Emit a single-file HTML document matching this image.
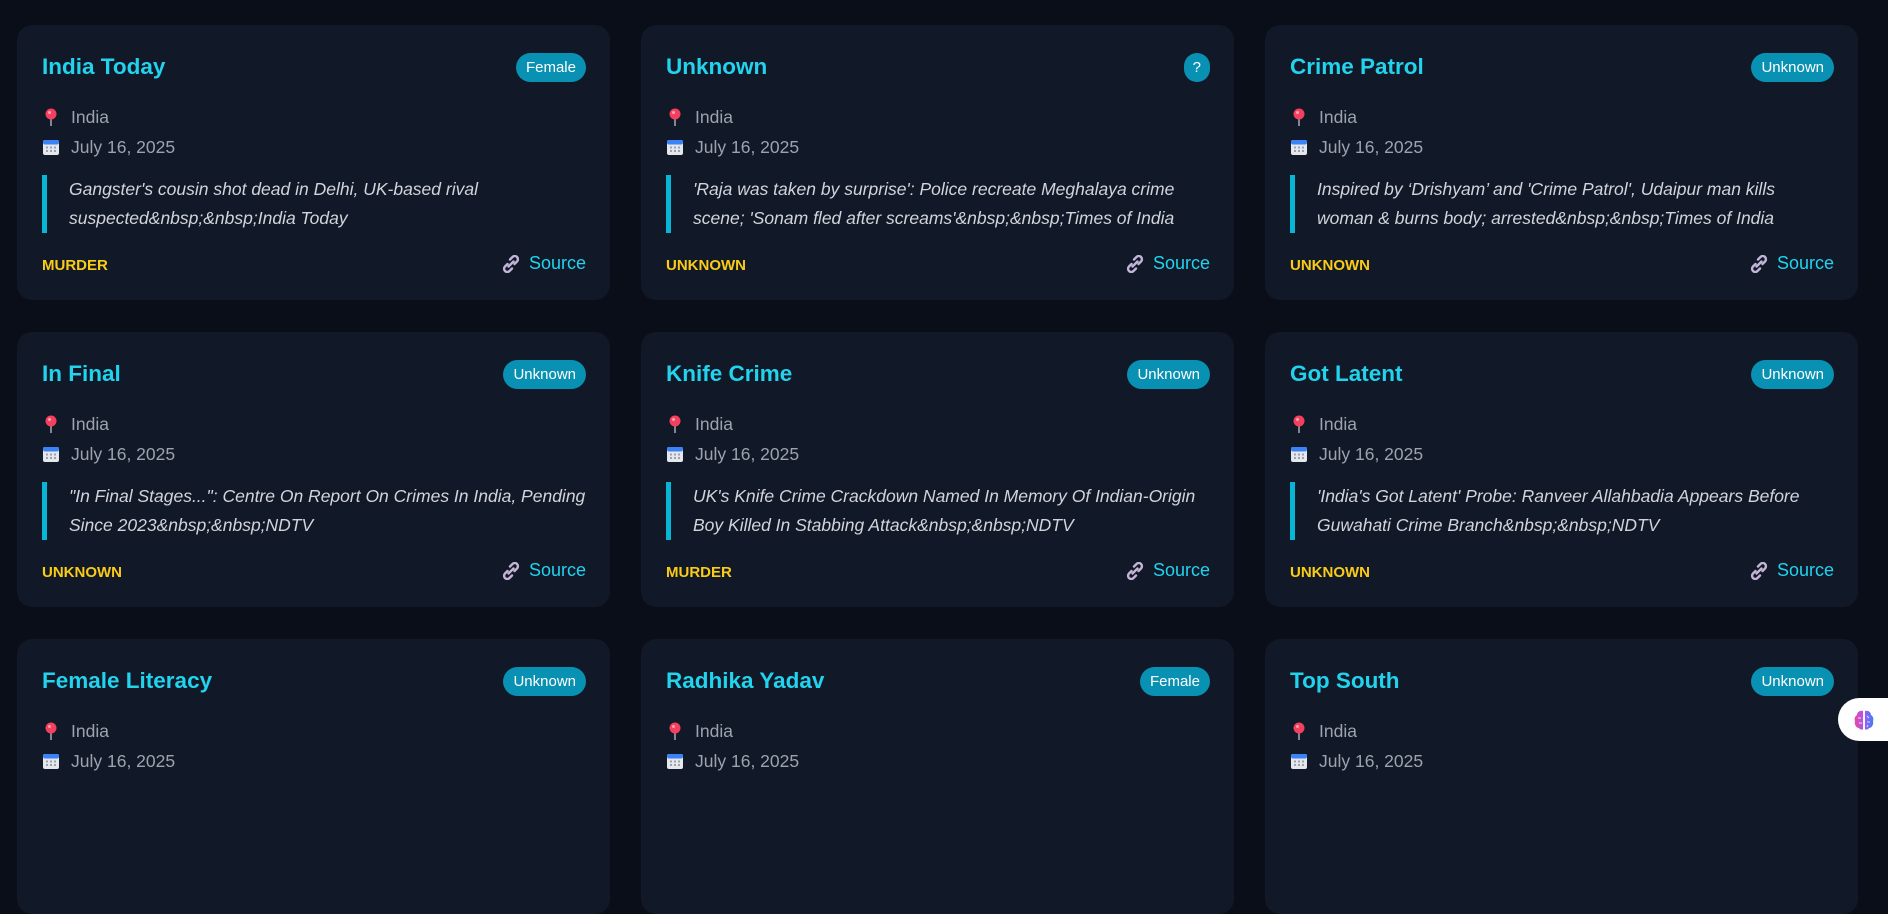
<!DOCTYPE html>
<html><head><meta charset="utf-8"><style>
*{margin:0;padding:0;box-sizing:border-box}
body{width:1888px;height:770px;overflow:hidden;background:#0a0e18;font-family:"Liberation Sans",sans-serif;position:relative}
.card{position:absolute;width:593px;height:275px;background:#111827;border-radius:15px}
.t{position:absolute;left:25px;top:27px;font-size:22.5px;font-weight:bold;color:#22d3ee;line-height:30px}
.b{position:absolute;right:24px;top:28px;height:29px;line-height:29px;padding:0 10px;border-radius:15px;background:#0891b2;color:#fff;font-size:15px}
.m{position:absolute;left:25px;font-size:17.5px;color:#9ca3af;line-height:22px;display:flex;align-items:center}
.m i{display:inline-flex;justify-content:center;width:18px;margin-right:11px}
.q{position:absolute;left:25px;top:150px;width:545px;border-left:5px solid #06b6d4;padding-left:22px;font-style:italic;font-size:17.5px;line-height:29px;color:#d1d5db}
.c{position:absolute;left:25px;top:232px;font-size:15px;font-weight:bold;color:#facc15}
.s{position:absolute;right:24px;top:228px;font-size:18px;color:#22d3ee;display:flex;align-items:center}
.s svg{margin-right:9px}
.fab{position:absolute;left:1838px;top:698px;width:60px;height:43px;background:#fff;border-radius:22px 0 0 22px}
</style></head><body>
<svg width="0" height="0" style="position:absolute"><defs>
<symbol id="pin" viewBox="0 0 14 18"><line x1="7" y1="8" x2="7" y2="18" stroke="#9ca3af" stroke-width="1.6"/><circle cx="7" cy="6" r="5.5" fill="#f43f5e"/><circle cx="5.5" cy="4.5" r="1.5" fill="#fda4af"/></symbol>
<symbol id="cal" viewBox="0 0 18 18"><rect x="1" y="2" width="16" height="15" rx="2" fill="#e5e7eb"/><rect x="1" y="2" width="16" height="4.5" rx="2" fill="#3b82f6"/><g fill="#94a3b8"><rect x="4" y="8.5" width="2" height="2"/><rect x="8" y="8.5" width="2" height="2"/><rect x="12" y="8.5" width="2" height="2"/><rect x="4" y="12" width="2" height="2"/><rect x="8" y="12" width="2" height="2"/><rect x="12" y="12" width="2" height="2"/></g></symbol>
<symbol id="lnk" viewBox="0 0 18 18"><g fill="none" stroke="#c4b5d8" stroke-width="2.4" stroke-linecap="round"><path d="M8 4.5l2.5-2.5a3 3 0 0 1 4.5 4.5l-2.5 2.5"/><path d="M10 13.5l-2.5 2.5a3 3 0 0 1-4.5-4.5l2.5-2.5"/><path d="M6.5 11.5l5-5"/></g></symbol>
</defs></svg>

<div class="card" style="left:17px;top:25px"><div class="t">India Today</div><div class="b">Female</div>
<div class="m" style="top:81px"><i><svg width="14" height="18"><use href="#pin"/></svg></i>India</div>
<div class="m" style="top:111px"><i><svg width="18" height="18"><use href="#cal"/></svg></i>July 16, 2025</div>
<div class="q">Gangster's cousin shot dead in Delhi, UK-based rival suspected&amp;nbsp;&amp;nbsp;India Today</div>
<div class="c">MURDER</div><div class="s"><svg width="18" height="18"><use href="#lnk"/></svg>Source</div></div>

<div class="card" style="left:641px;top:25px"><div class="t">Unknown</div><div class="b" style="padding:0 9px">?</div>
<div class="m" style="top:81px"><i><svg width="14" height="18"><use href="#pin"/></svg></i>India</div>
<div class="m" style="top:111px"><i><svg width="18" height="18"><use href="#cal"/></svg></i>July 16, 2025</div>
<div class="q">'Raja was taken by surprise': Police recreate Meghalaya crime scene; 'Sonam fled after screams'&amp;nbsp;&amp;nbsp;Times of India</div>
<div class="c">UNKNOWN</div><div class="s"><svg width="18" height="18"><use href="#lnk"/></svg>Source</div></div>

<div class="card" style="left:1265px;top:25px"><div class="t">Crime Patrol</div><div class="b">Unknown</div>
<div class="m" style="top:81px"><i><svg width="14" height="18"><use href="#pin"/></svg></i>India</div>
<div class="m" style="top:111px"><i><svg width="18" height="18"><use href="#cal"/></svg></i>July 16, 2025</div>
<div class="q">Inspired by ‘Drishyam’ and 'Crime Patrol', Udaipur man kills<br>woman &amp; burns body; arrested&amp;nbsp;&amp;nbsp;Times of India</div>
<div class="c">UNKNOWN</div><div class="s"><svg width="18" height="18"><use href="#lnk"/></svg>Source</div></div>

<div class="card" style="left:17px;top:332px"><div class="t">In Final</div><div class="b">Unknown</div>
<div class="m" style="top:81px"><i><svg width="14" height="18"><use href="#pin"/></svg></i>India</div>
<div class="m" style="top:111px"><i><svg width="18" height="18"><use href="#cal"/></svg></i>July 16, 2025</div>
<div class="q" style="white-space:nowrap">"In Final Stages...": Centre On Report On Crimes In India, Pending<br>Since 2023&amp;nbsp;&amp;nbsp;NDTV</div>
<div class="c">UNKNOWN</div><div class="s"><svg width="18" height="18"><use href="#lnk"/></svg>Source</div></div>

<div class="card" style="left:641px;top:332px"><div class="t">Knife Crime</div><div class="b">Unknown</div>
<div class="m" style="top:81px"><i><svg width="14" height="18"><use href="#pin"/></svg></i>India</div>
<div class="m" style="top:111px"><i><svg width="18" height="18"><use href="#cal"/></svg></i>July 16, 2025</div>
<div class="q">UK's Knife Crime Crackdown Named In Memory Of Indian-Origin<br>Boy Killed In Stabbing Attack&amp;nbsp;&amp;nbsp;NDTV</div>
<div class="c">MURDER</div><div class="s"><svg width="18" height="18"><use href="#lnk"/></svg>Source</div></div>

<div class="card" style="left:1265px;top:332px"><div class="t">Got Latent</div><div class="b">Unknown</div>
<div class="m" style="top:81px"><i><svg width="14" height="18"><use href="#pin"/></svg></i>India</div>
<div class="m" style="top:111px"><i><svg width="18" height="18"><use href="#cal"/></svg></i>July 16, 2025</div>
<div class="q">'India's Got Latent' Probe: Ranveer Allahbadia Appears Before<br>Guwahati Crime Branch&amp;nbsp;&amp;nbsp;NDTV</div>
<div class="c">UNKNOWN</div><div class="s"><svg width="18" height="18"><use href="#lnk"/></svg>Source</div></div>

<div class="card" style="left:17px;top:639px"><div class="t">Female Literacy</div><div class="b">Unknown</div>
<div class="m" style="top:81px"><i><svg width="14" height="18"><use href="#pin"/></svg></i>India</div>
<div class="m" style="top:111px"><i><svg width="18" height="18"><use href="#cal"/></svg></i>July 16, 2025</div></div>

<div class="card" style="left:641px;top:639px"><div class="t">Radhika Yadav</div><div class="b">Female</div>
<div class="m" style="top:81px"><i><svg width="14" height="18"><use href="#pin"/></svg></i>India</div>
<div class="m" style="top:111px"><i><svg width="18" height="18"><use href="#cal"/></svg></i>July 16, 2025</div></div>

<div class="card" style="left:1265px;top:639px"><div class="t">Top South</div><div class="b">Unknown</div>
<div class="m" style="top:81px"><i><svg width="14" height="18"><use href="#pin"/></svg></i>India</div>
<div class="m" style="top:111px"><i><svg width="18" height="18"><use href="#cal"/></svg></i>July 16, 2025</div></div>

<div class="fab"><svg width="24" height="24" viewBox="0 0 24 24" style="position:absolute;left:14px;top:10px">
<defs><linearGradient id="g" x1="0" x2="1"><stop offset="0" stop-color="#ec4899"/><stop offset=".5" stop-color="#a855f7"/><stop offset="1" stop-color="#3b82f6"/></linearGradient></defs>
<path d="M11 3C8 2 5 4 5 7 3 8 2 11 3 13 2 16 4 20 7 20 8 22 11 22 11 21Z M13 3C16 2 19 4 19 7 21 8 22 11 21 13 22 16 20 20 17 20 16 22 13 22 13 21Z" fill="url(#g)"/>
<g stroke="#fff" stroke-width="1" fill="none" opacity=".8"><path d="M6 10h3M7 15h3M15 8l2 2M15 14h3M16 17l-1 2"/></g></svg></div>
</body></html>
